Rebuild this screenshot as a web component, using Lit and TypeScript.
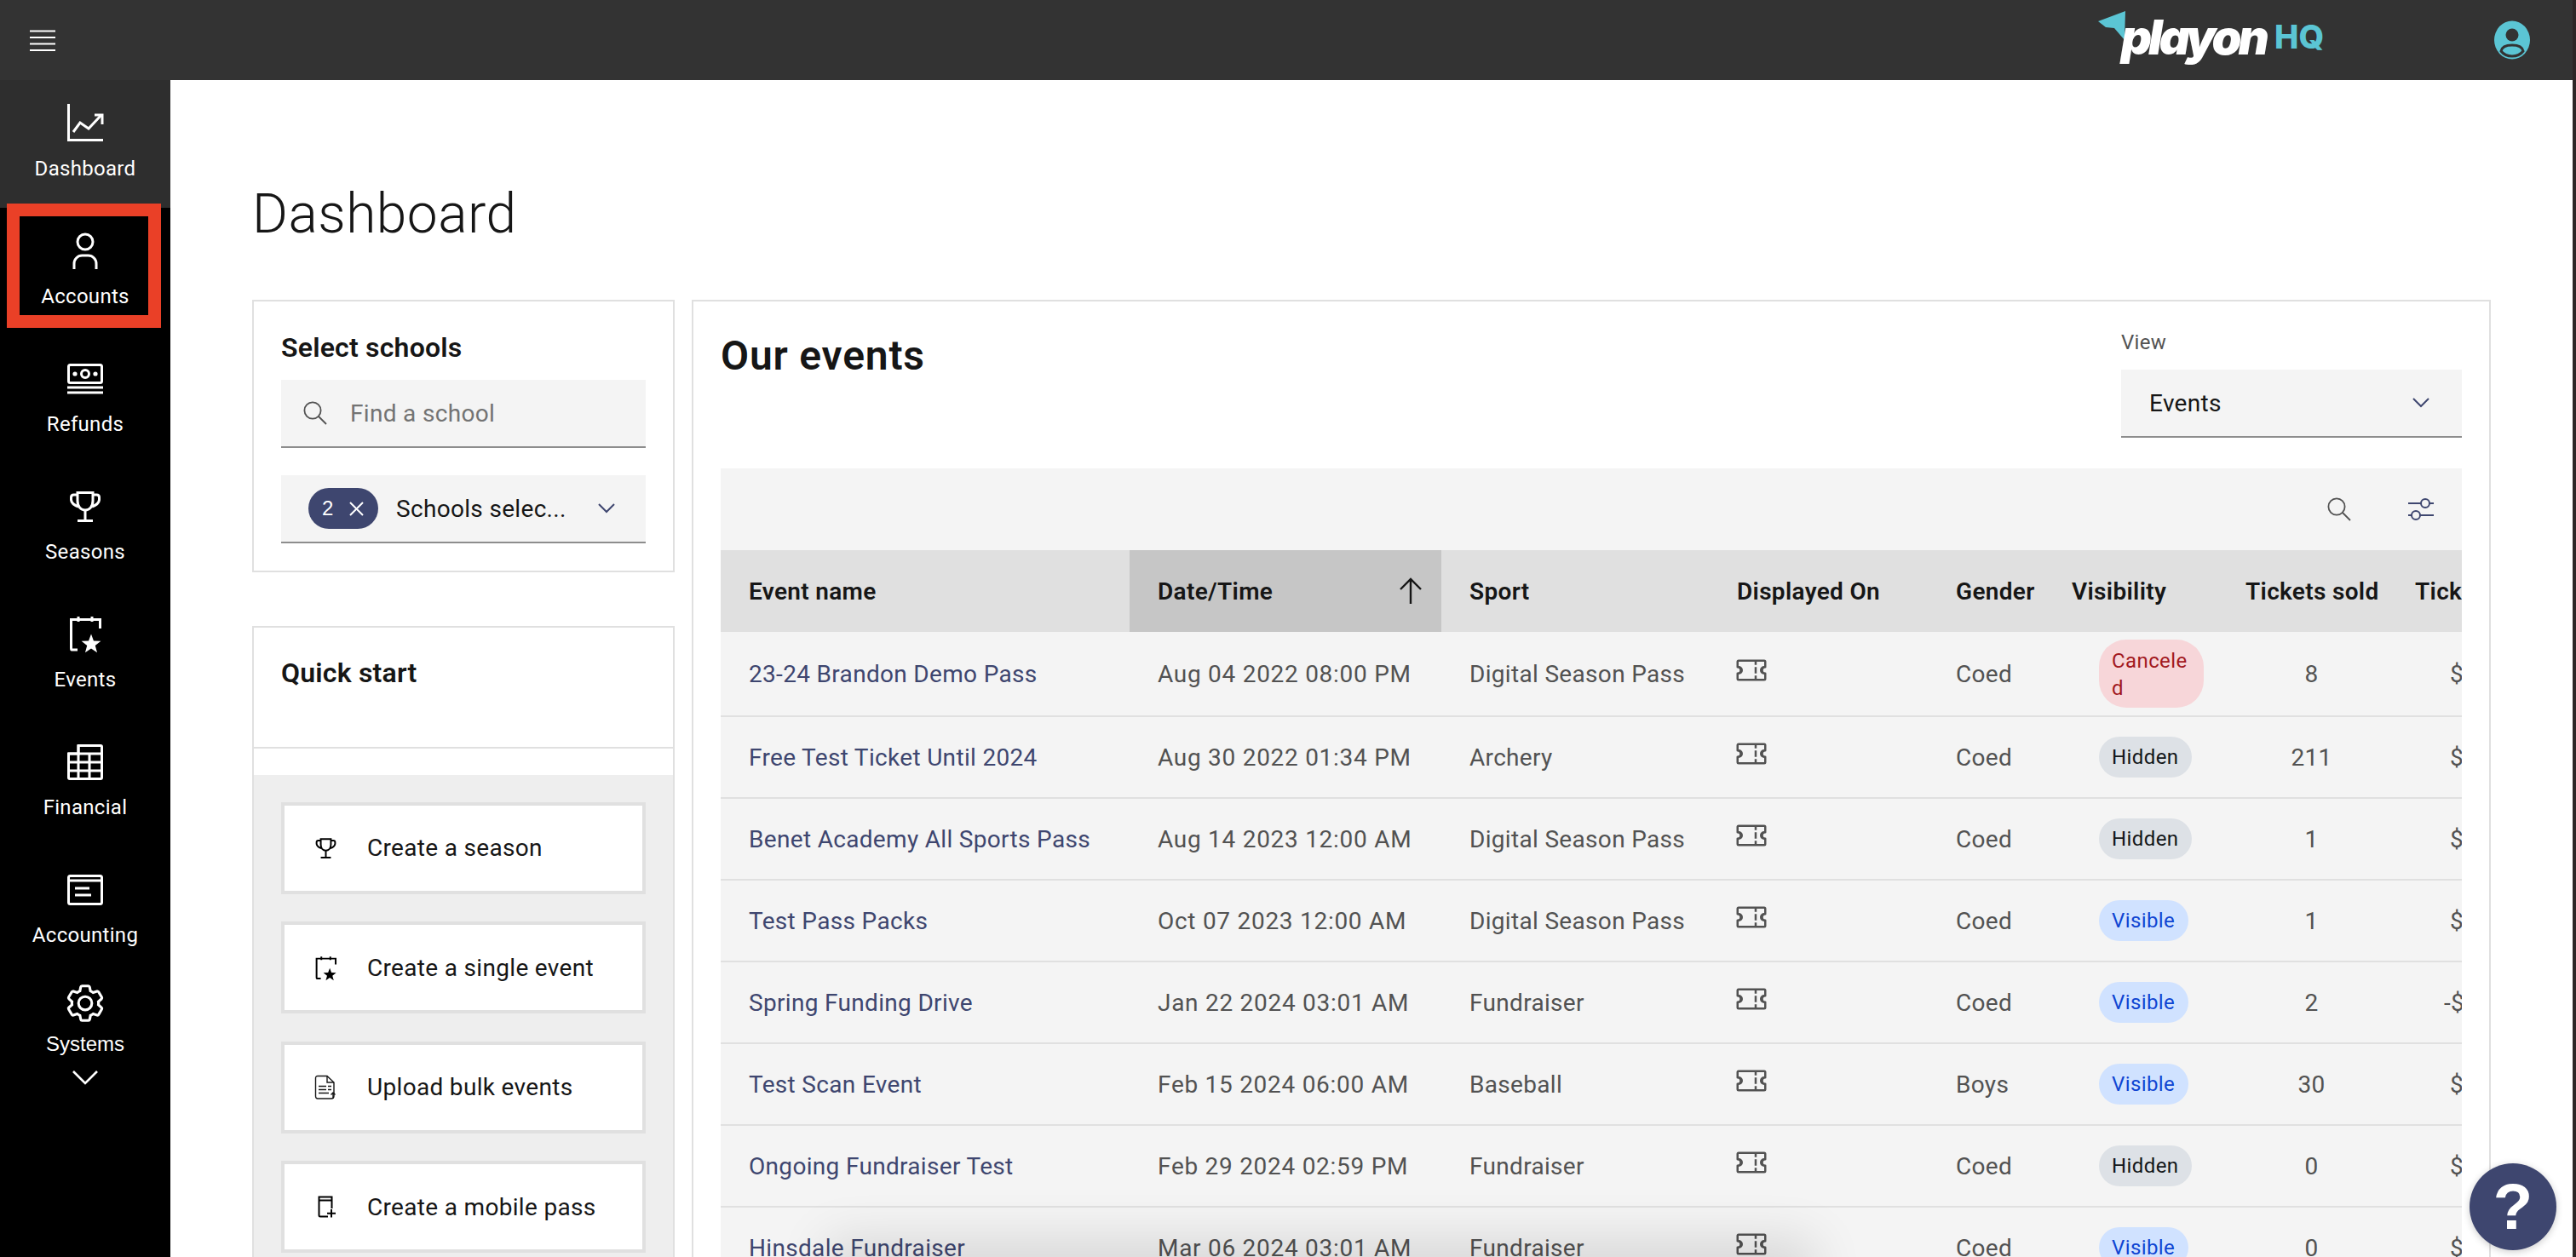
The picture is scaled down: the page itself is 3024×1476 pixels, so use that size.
import { LitElement, html, css, svg } from "lit";
import { customElement } from "lit/decorators.js";

const starPts = (cx: number, cy: number, R: number, r: number) => {
  const p: string[] = [];
  for (let i = 0; i < 10; i++) {
    const a = (-90 + i * 36) * Math.PI / 180;
    const rad = i % 2 ? r : R;
    p.push(`${(cx + rad * Math.cos(a)).toFixed(2)},${(cy + rad * Math.sin(a)).toFixed(2)}`);
  }
  return p.join(" ");
};

const icons: Record<string, any> = {
  chart: svg`<path d="M2.5 0V42.5H43" /><path d="M8 33 16 22 26 29 41 13" /><path d="M33 13H42V24" />`,
  user: svg`<circle cx="22" cy="12" r="9"/><path d="M9 44V38A9.5 9.5 0 0 1 18.5 28H25.5A9.5 9.5 0 0 1 35 38V44"/>`,
  money: svg`<rect x="2.5" y="6.5" width="39" height="21" rx="2"/><circle cx="22" cy="17" r="4.5"/><circle cx="10" cy="17" r="2.6" class="solid"/><circle cx="34" cy="17" r="2.6" class="solid"/><path d="M1 33H43M1 39H43"/>`,
  trophy: svg`<path d="M13 6.5H31V16C31 23 27 27 22 27C17 27 13 23 13 16Z"/><path d="M13 9H8.5Q5.5 9 5.5 12V15Q6 20 14 23"/><path d="M31 9H35.5Q38.5 9 38.5 12V15Q38 20 30 23"/><path d="M22 27V39M13 39.5H31"/>`,
  event: svg`<path d="M13 41H6Q5.5 41 5.5 39V5.5H39.5V16"/><path d="M14 2V8M30 2V8"/><polygon class="solid" points="${starPts(29, 34.5, 12, 5)}"/>`,
  table: svg`<path d="M14 3.5H40Q41.5 3.5 41.5 5V41Q41.5 42.5 40 42.5H4Q2.5 42.5 2.5 41V13H14Z"/><path d="M14 3V42M27 13V42M2 13H42M2 23H42M2 33H42"/>`,
  ledger: svg`<rect x="2.5" y="6.5" width="39" height="33" rx="2"/><path d="M2 12H42"/><path d="M10 21H27M10 29H29"/>`,
};

const navIcon = (k: string) => html`<svg class="ico" viewBox="0 0 44 44">${icons[k]}</svg>`;

const ticket = html`<svg class="ticket" viewBox="0 0 32 32"><path d="M29,14a1,1,0,0,0,1-1V8a2,2,0,0,0-2-2H4A2,2,0,0,0,2,8v5a1,1,0,0,0,1,1,2,2,0,0,1,0,4,1,1,0,0,0-1,1v5a2,2,0,0,0,2,2H28a2,2,0,0,0,2-2V19a1,1,0,0,0-1-1,2,2,0,0,1,0-4Zm-1-2a4,4,0,0,0,0,8v4H21V21H19v3H4V20a4,4,0,0,0,0-8V8H19v3h2V8h7Z"/><rect x="19" y="13" width="2" height="6"/></svg>`;

const search = html`<svg class="search" viewBox="0 0 28 28"><circle cx="11" cy="11" r="9.6"/><path d="M18 18 27 27"/></svg>`;
const chevron = html`<svg class="chev" viewBox="0 0 20 12"><path d="M1 1 10 10 19 1"/></svg>`;

const gear = "M27,16.76c0-.25,0-.5,0-.76s0-.51,0-.77l1.92-1.68A2,2,0,0,0,29.3,11L26.94,7a2,2,0,0,0-1.73-1,2,2,0,0,0-.64.1l-2.43.82a11.35,11.35,0,0,0-1.31-.75l-.51-2.52a2,2,0,0,0-2-1.61H13.64a2,2,0,0,0-2,1.61l-.51,2.52a11.48,11.48,0,0,0-1.32.75L7.43,6.06A2,2,0,0,0,6.79,6,2,2,0,0,0,5.06,7L2.7,11a2,2,0,0,0,.41,2.51L5,15.24c0,.25,0,.5,0,.76s0,.51,0,.77L3.11,18.45A2,2,0,0,0,2.7,21L5.06,25a2,2,0,0,0,1.73,1,2,2,0,0,0,.64-.1l2.43-.82a11.35,11.35,0,0,0,1.31.75l.51,2.52a2,2,0,0,0,2,1.61h4.72a2,2,0,0,0,2-1.61l.51-2.52a11.48,11.48,0,0,0,1.32-.75l2.42.82a2,2,0,0,0,.64.1,2,2,0,0,0,1.73-1L29.3,21a2,2,0,0,0-.41-2.51ZM25.21,24l-3.43-1.16a8.86,8.86,0,0,1-2.71,1.57L18.36,28H13.64l-.71-3.55a9.36,9.36,0,0,1-2.7-1.57L6.79,24,4.43,20l2.72-2.4a8.9,8.9,0,0,1,0-3.13L4.43,12,6.79,8l3.43,1.16a8.86,8.86,0,0,1,2.71-1.57L13.64,4h4.72l.71,3.55a9.36,9.36,0,0,1,2.7,1.57L25.21,8,27.57,12l-2.72,2.4a8.9,8.9,0,0,1,0,3.13L27.57,20ZM16,22a6,6,0,1,1,6-6A5.94,5.94,0,0,1,16,22Zm0-10a3.91,3.91,0,0,0-4,4,3.91,3.91,0,0,0,4,4,3.91,3.91,0,0,0,4-4A3.91,3.91,0,0,0,16,12Z";

const nav = [
  { k: "chart", t: "Dashboard", cls: "active" },
  { k: "user", t: "Accounts", cls: "" },
  { k: "money", t: "Refunds", cls: "" },
  { k: "trophy", t: "Seasons", cls: "" },
  { k: "event", t: "Events", cls: "" },
  { k: "table", t: "Financial", cls: "" },
  { k: "ledger", t: "Accounting", cls: "short" },
];

const rows = [
  ["23-24 Brandon Demo Pass", "Aug 04 2022 08:00 PM", "Digital Season Pass", "Coed", "Cancele\nd", "8", "$0.00"],
  ["Free Test Ticket Until 2024", "Aug 30 2022 01:34 PM", "Archery", "Coed", "Hidden", "211", "$0.00"],
  ["Benet Academy All Sports Pass", "Aug 14 2023 12:00 AM", "Digital Season Pass", "Coed", "Hidden", "1", "$0.00"],
  ["Test Pass Packs", "Oct 07 2023 12:00 AM", "Digital Season Pass", "Coed", "Visible", "1", "$0.00"],
  ["Spring Funding Drive", "Jan 22 2024 03:01 AM", "Fundraiser", "Coed", "Visible", "2", "-$2.00"],
  ["Test Scan Event", "Feb 15 2024 06:00 AM", "Baseball", "Boys", "Visible", "30", "$0.00"],
  ["Ongoing Fundraiser Test", "Feb 29 2024 02:59 PM", "Fundraiser", "Coed", "Hidden", "0", "$0.00"],
  ["Hinsdale Fundraiser", "Mar 06 2024 03:01 AM", "Fundraiser", "Coed", "Visible", "0", "$0.00"],
];

const chipClass = (s: string) => (s.startsWith("Cancel") ? "cancel" : s === "Hidden" ? "hidden" : "visible");

@customElement("app-root")
export class AppRoot extends LitElement {
  static styles = css`
    :host {
      display: block;
      position: relative;
      width: 3024px;
      height: 1476px;
      overflow: hidden;
      background: #fff;
      font-family: Roboto, "Noto Sans", sans-serif;
      letter-spacing: 0.32px;
      color: #161616;
    }
    * { box-sizing: border-box; }
    .app { display: flex; flex-direction: column; height: 100%; border-right: 4px solid #2d2626; }
    .top { flex: none; height: 94px; background: #333; display: flex; align-items: center; padding-left: 35px; }
    .burger { width: 30px; height: 25px; display: block; stroke: #fff; stroke-width: 2.2; }
    .logo { display: block; margin-left: 2398px; width: 262px; height: 94px; position: relative; flex: none; }
    .arrow { position: absolute; left: 0; top: 13px; width: 33px; height: 36px; fill: #5bc5d4; }
    .playon {
      position: absolute; left: 27px; top: 0; font: italic 900 56px/88px Inter, "Liberation Sans", sans-serif;
      letter-spacing: -4px; color: #fff;
    }
    .hq { position: absolute; left: 207px; top: 20px; font: 800 38px/46px Inter, "Liberation Sans", sans-serif; letter-spacing: 0; color: #5bc5d4; }
    .avatar { width: 44px; height: 46px; margin-left: 202px; flex: none; }
    .body { flex: 1; display: flex; min-height: 0; }
    .side { flex: none; width: 200px; background: #000; color: #fff; display: flex; flex-direction: column; }
    .nav { height: 150px; flex: none; display: flex; flex-direction: column; align-items: center; padding-top: 28px; }
    .nav.active { background: #2e2e2e; }
    .nav.short { height: 134px; }
    .nav.last { height: 150px; }
    .ico { width: 44px; height: 44px; flex: none; fill: none; stroke: currentColor; stroke-width: 3; overflow: visible; display: block; }
    .ico .solid { fill: currentColor; stroke: none; }
    .nav .label { margin-top: 16px; font-size: 24px; line-height: 32px; font-weight: 400; letter-spacing: 0.3px; white-space: nowrap; }
    .nav .sys { font-family: "Liberation Sans", sans-serif; margin-top: 10px; letter-spacing: 0; line-height: 32px; }
    .gear { width: 50px; height: 50px; margin: -3px 0 -3px; fill: #fff; display: block; }
    .sysChev { width: 30px; height: 17px; margin-top: 15px; fill: none; stroke: #fff; stroke-width: 2.6; display: block; }
    .main { flex: 1; min-width: 0; background: #fff; padding: 118px 0 0 96px; overflow: hidden; }
    h1 { margin: 0 0 60px; font-size: 64px; line-height: 80px; font-weight: 300; letter-spacing: 0.5px; }
    .cols { display: flex; gap: 20px; align-items: flex-start; }
    .left { width: 496px; flex: none; display: flex; flex-direction: column; gap: 63px; }
    .card { border: 2px solid #e0e0e0; background: #fff; }
    .pad { padding: 32px; }
    h3 { margin: 0; font-size: 32px; line-height: 44px; font-weight: 600; letter-spacing: 0.2px; }
    .field { height: 80px; background: #f4f4f4; border-bottom: 2px solid #8d8d8d; display: flex; align-items: center; font-size: 28px; }
    .find { margin-top: 16px; padding-left: 26px; gap: 27px; color: #737373; }
    .search { width: 28px; height: 28px; fill: none; stroke: #525252; stroke-width: 1.8; flex: none; display: block; }
    .multi { margin-top: 32px; padding-left: 32px; }
    .count { width: 82px; height: 48px; border-radius: 24px; background: #3e466f; color: #fff; display: flex; align-items: center; padding-left: 16px; font: 24px "Liberation Sans", sans-serif; flex: none; }
    .count svg { width: 17px; height: 17px; margin-left: 18px; stroke: #fff; stroke-width: 2; display: block; }
    .multi .txt { margin-left: 21px; white-space: nowrap; }
    .chev { width: 20px; height: 12px; fill: none; stroke: #3e466f; stroke-width: 2; display: block; flex: none; }
    .multi .chev { margin-left: 37px; }
    .qhead { padding: 31px 32px 0; height: 142px; border-bottom: 2px solid #e0e0e0; }
    .gap { height: 31px; }
    .panel { background: #eee; padding: 31.5px 32px 40px; display: flex; flex-direction: column; gap: 32.5px; }
    .btn { height: 108px; background: #fff; border: 4px solid #e0e0e0; display: flex; align-items: center; padding-left: 21px; font-size: 28px; color: #161616; }
    .bi { width: 54px; height: 40px; display: flex; align-items: center; justify-content: center; flex: none; margin-right: 22px; color: #000; }
    .bi .ico { width: 29px; height: 29px; }
    .doc { width: 26px; height: 30px; fill: none; stroke: #161616; stroke-width: 1.4; display: block; }
    .mob { width: 22px; height: 26px; fill: none; stroke: #000; stroke-width: 2; display: block; margin-left: 4px; }
    .events { flex: none; width: 2112px; height: 1300px; padding: 32px; }
    .ehead { display: flex; justify-content: space-between; align-items: flex-start; margin-bottom: 36px; }
    h2 { margin: 0; font-size: 48px; line-height: 64px; font-weight: 600; letter-spacing: 0.8px; }
    .view { width: 400px; }
    .view label { display: block; height: 48px; font-size: 24px; line-height: 32px; color: #525252; }
    .viewsel { justify-content: space-between; padding: 0 38px 0 33px; color: #161616; }
    .table { width: 2044px; overflow: hidden; background: #f4f4f4; }
    .tools { height: 96px; display: flex; align-items: center; justify-content: flex-end; padding-right: 32px; gap: 66px; }
    .filter { width: 32px; height: 28px; fill: none; stroke: #3e466f; stroke-width: 2; display: block; }
    .filter circle { fill: #f4f4f4; }
    .row { display: grid; grid-template-columns: 480px 366px 314px 257px 136px 204px 199px 88px; width: 2044px; align-items: stretch; }
    .head { height: 96px; background: #e0e0e0; font-weight: 600; }
    .line { height: 96px; border-bottom: 2px solid #e0e0e0; color: #525252; }
    .line.tall { height: 100px; }
    .cell { display: flex; align-items: center; padding-left: 33px; font-size: 28px; white-space: nowrap; min-width: 0; overflow: hidden; }
    .cell.sorted { background: #c6c6c6; justify-content: space-between; padding-right: 23px; }
    .sort { width: 26px; height: 32px; fill: none; stroke: #161616; stroke-width: 2.4; display: block; }
    .name { color: #3e466f; }
    .date { letter-spacing: 0.72px; }
    .num { padding-left: 22px; justify-content: center; }
    .amount { padding-left: 74px; overflow: visible; }
    .amount.neg { padding-left: 67px; }
    .ticket { width: 40px; height: 40px; fill: #525252; margin: 0 0 8px -3px; display: block; flex: none; }
    .chipcell { padding-left: 65px; overflow: visible; }
    .chip { display: block; height: 48px; line-height: 48px; border-radius: 24px; padding: 0 16px 0 15px; font-size: 24px; white-space: pre-line; letter-spacing: 0.4px; }
    .chip.visible { background: #d0e2ff; color: #0f45d2; }
    .chip.hidden { background: #dde1e6; color: #121619; }
    .chip.cancel { background: #f7d6d9; color: #a2191f; height: 80px; line-height: 32px; padding: 9px 15px 7px; width: 123px; border-radius: 32px; }
    .redbox { position: absolute; left: 8px; top: 239px; width: 181px; height: 146px; border: 15px solid #ea4027; }
    .help { position: absolute; left: 2899px; top: 1366px; width: 102px; height: 102px; border-radius: 50%; background: #3e466f; color: #fff; display: flex; align-items: center; justify-content: center; font: 700 76px/1 "Liberation Sans", sans-serif; box-shadow: 0 2px 8px rgba(0,0,0,.2); }
    .shade { position: absolute; left: 1000px; top: 1486px; width: 1100px; height: 10px; box-shadow: 0 0 60px 30px rgba(0,0,0,.12); }
  `;

  render() {
    return html`
      <div class="app">
        <header class="top">
          <svg class="burger" viewBox="0 0 30 25"><path d="M0 1.5H30M0 9H30M0 16.5H30M0 24H30" /></svg>
          <div class="logo">
            <svg class="arrow" viewBox="0 0 33 36"><polygon points="0,12 32,0 31,34 19,20 9,19" /></svg>
            <span class="playon">playon</span>
            <span class="hq">HQ</span>
          </div>
          <svg class="avatar" viewBox="0 0 44 46">
            <ellipse cx="22" cy="23" rx="21" ry="22.5" fill="#5bc5d4" />
            <circle cx="22" cy="17" r="7.5" fill="#333" />
            <path d="M9 36C10 31 15 29 22 29S34 31 35 36C32 40 27 42 22 42S12 40 9 36Z" fill="#5bc5d4" stroke="#333" stroke-width="3" />
          </svg>
        </header>
        <div class="body">
          <nav class="side">
            ${nav.map(n => html`<div class="nav ${n.cls}">${navIcon(n.k)}<span class="label">${n.t}</span></div>`)}
            <div class="nav last">
              <svg class="gear" viewBox="0 0 32 32"><path d="${gear}" /></svg>
              <span class="label sys">Systems</span>
              <svg class="sysChev" viewBox="0 0 30 17"><path d="M1 1 15 15 29 1" /></svg>
            </div>
          </nav>
          <main class="main">
            <h1>Dashboard</h1>
            <div class="cols">
              <div class="left">
                <section class="card pad">
                  <h3>Select schools</h3>
                  <div class="field find">${search}<span>Find a school</span></div>
                  <div class="field multi">
                    <span class="count">2<svg viewBox="0 0 17 17"><path d="M1 1 16 16M16 1 1 16" /></svg></span>
                    <span class="txt">Schools selec...</span>
                    ${chevron}
                  </div>
                </section>
                <section class="card">
                  <div class="qhead"><h3>Quick start</h3></div>
                  <div class="gap"></div>
                  <div class="panel">
                    <div class="btn"><span class="bi">${navIcon("trophy")}</span>Create a season</div>
                    <div class="btn"><span class="bi">${navIcon("event")}</span>Create a single event</div>
                    <div class="btn"><span class="bi">
                      <svg class="doc" viewBox="0 0 26 30"><path d="M4 1.5H15L23 9V25Q23 28 20 28H4Q1.5 28 1.5 25V4Q1.5 1.5 4 1.5Z" /><path d="M15 1.5V9H23" /><path d="M5 13.5H14M16 13.5H20M5 17.5H14M16 17.5H20M5 21.5H17" /><path d="M22 28V21M19.5 23.5 22 21 24.5 23.5" /></svg>
                    </span>Upload bulk events</div>
                    <div class="btn"><span class="bi">
                      <svg class="mob" viewBox="0 0 22 26"><path d="M12 24.5H3Q1.5 24.5 1.5 23V1.5H16.5V15" /><path d="M1.5 5.5H16.5" /><path d="M16 16V25.5M11 20.7H21" /></svg>
                    </span>Create a mobile pass</div>
                  </div>
                </section>
              </div>
              <section class="card events">
                <div class="ehead">
                  <h2>Our events</h2>
                  <div class="view">
                    <label>View</label>
                    <div class="field viewsel"><span>Events</span>${chevron}</div>
                  </div>
                </div>
                <div class="table">
                  <div class="tools">
                    ${search}
                    <svg class="filter" viewBox="0 0 32 28"><path d="M1 7H31M1 21H31" /><circle cx="21" cy="7" r="5" /><circle cx="10" cy="21" r="5" /></svg>
                  </div>
                  <div class="row head">
                    <div class="cell">Event name</div>
                    <div class="cell sorted">Date/Time<svg class="sort" viewBox="0 0 26 32"><path d="M13 31V2M1 14 13 2 25 14" /></svg></div>
                    <div class="cell">Sport</div>
                    <div class="cell">Displayed On</div>
                    <div class="cell">Gender</div>
                    <div class="cell">Visibility</div>
                    <div class="cell">Tickets sold</div>
                    <div class="cell">Tickets revenue</div>
                  </div>
                  ${rows.map((r, i) => html`
                    <div class="row line ${i === 0 ? "tall" : ""}">
                      <div class="cell name">${r[0]}</div>
                      <div class="cell date">${r[1]}</div>
                      <div class="cell">${r[2]}</div>
                      <div class="cell">${ticket}</div>
                      <div class="cell">${r[3]}</div>
                      <div class="cell chipcell"><span class="chip ${chipClass(r[4])}">${r[4]}</span></div>
                      <div class="cell num">${r[5]}</div>
                      <div class="cell amount ${r[6].startsWith("-") ? "neg" : ""}">${r[6]}</div>
                    </div>`)}
                </div>
              </section>
            </div>
          </main>
        </div>
      </div>
      <div class="redbox"></div>
      <div class="shade"></div>
      <div class="help">?</div>
    `;
  }
}
